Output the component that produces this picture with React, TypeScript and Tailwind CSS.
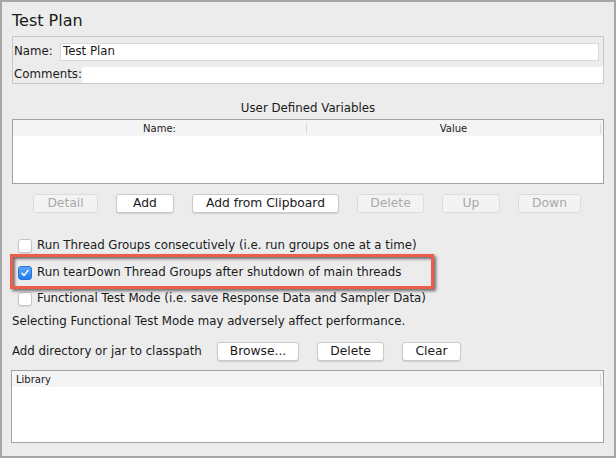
import React from "react";

const font = { fontFamily: '"DejaVu Sans", "Noto Sans", sans-serif' };

function Btn({ label, w, disabled }: { label: string; w: string; disabled?: boolean }) {
  return (
    <div
      className={`${w} h-[19px] flex items-center justify-center rounded-[3px] border text-[12.3px] leading-none ${
        disabled
          ? "bg-[#f3f3f3] border-[#dcdcdc] text-[#a9a9a9]"
          : "bg-white border-[#c9c9c9] text-[#1a1a1a] shadow-[0_1px_1px_rgba(0,0,0,0.12)]"
      }`}
    >
      {label}
    </div>
  );
}

function Check({ checked }: { checked?: boolean }) {
  if (checked) {
    return (
      <div className="w-[14px] h-[14px] rounded-[3px] bg-gradient-to-b from-[#5aa8fb] to-[#1e7cf0] border border-[#2a76d8] flex items-center justify-center">
        <svg width="10" height="10" viewBox="0 0 10 10">
          <path d="M2 5.3 L4.1 7.4 L8 2.6" fill="none" stroke="white" strokeWidth="1.5" strokeLinecap="round" strokeLinejoin="round" />
        </svg>
      </div>
    );
  }
  return <div className="w-[14px] h-[14px] rounded-[3px] bg-white border border-[#c4c4c4] shadow-[0_1px_1px_rgba(0,0,0,0.08)]" />;
}

export default function App() {
  return (
    <div style={font} className="w-[616px] h-[458px] bg-[#ececec] border-2 border-[#a7a7a7] text-[#1a1a1a] flex flex-col">
      <div className="pl-[10px] pt-[9px] h-[34px] text-[16px] leading-[20px]">Test Plan</div>
      <div className="ml-[10px] w-[592px] h-[48px] border border-[#c9c9c9] flex flex-col">
        <div className="h-[29px] flex items-center">
          <div className="pl-[1px] w-[47px] text-[11.8px]">Name:</div>
          <div className="w-[539px] h-[18px] bg-white border border-[#d9d9d9] flex items-center pl-[2px] text-[11.8px]">Test Plan</div>
        </div>
        <div className="h-[17px] flex items-center">
          <div className="pl-[1px] w-[69px] text-[11.8px]">Comments:</div>
          <div className="flex-1 h-[16px] bg-white" />
        </div>
      </div>
      <div className="h-[35px] flex items-center justify-center pt-[16px] pb-[1px] text-[11.8px]">User Defined Variables</div>
      <div className="ml-[10px] w-[592px] h-[65px] border border-[#a2a2a2] bg-white flex flex-col">
        <div className="h-[16px] bg-[#f4f4f4] flex items-center text-[10px] text-[#222]">
          <div className="flex-1 text-center">Name:</div>
          <div className="w-px h-[11px] bg-[#dadada]" />
          <div className="flex-1 text-center">Value</div>
          <div className="w-px h-[11px] bg-[#dadada] mr-[2px]" />
        </div>
      </div>
      <div className="mt-[10px] ml-[31px] flex gap-[18px]">
        <Btn label="Detail" w="w-[65px]" disabled />
        <Btn label="Add" w="w-[58px]" />
        <Btn label="Add from Clipboard" w="w-[147px]" />
        <Btn label="Delete" w="w-[67px]" disabled />
        <Btn label="Up" w="w-[58px]" disabled />
        <Btn label="Down" w="w-[63px]" disabled />
      </div>
      <div className="mt-[26px] ml-[16px] h-[14px] flex items-center gap-[5px] text-[11.8px]">
        <Check />
        <span>Run Thread Groups consecutively (i.e. run groups one at a time)</span>
      </div>
      <div className="relative mt-[13px] ml-[16px] h-[14px] flex items-center gap-[5px] text-[11.8px]">
        <Check checked />
        <span>Run tearDown Thread Groups after shutdown of main threads</span>
        <div className="absolute left-[-8px] top-[-12px] w-[424px] h-[35px] border-[3px] border-[#ec5d4d] shadow-[2px_2px_3px_rgba(0,0,0,0.55),inset_2px_2px_3px_rgba(0,0,0,0.55)]" />
      </div>
      <div className="mt-[12px] ml-[16px] h-[14px] flex items-center gap-[5px] text-[11.8px]">
        <Check />
        <span>Functional Test Mode (i.e. save Response Data and Sampler Data)</span>
      </div>
      <div className="mt-[9px] ml-[10px] h-[14px] flex items-center text-[11.8px]">
        Selecting Functional Test Mode may adversely affect performance.
      </div>
      <div className="mt-[13px] ml-[10px] h-[19px] flex items-center text-[11.8px]">
        <div className="w-[205px]">Add directory or jar to classpath</div>
        <div className="flex gap-[18px]">
          <Btn label="Browse..." w="w-[82px]" />
          <Btn label="Delete" w="w-[67px]" />
          <Btn label="Clear" w="w-[59px]" />
        </div>
      </div>
      <div className="mt-[9px] ml-[9px] w-[593px] h-[73px] border border-[#a2a2a2] bg-white flex flex-col">
        <div className="h-[16px] bg-[#f4f4f4] flex items-center text-[10px] text-[#222] pl-[4px]">
          <div className="flex-1">Library</div>
          <div className="w-px h-[11px] bg-[#dadada] mr-[2px]" />
        </div>
      </div>
    </div>
  );
}
